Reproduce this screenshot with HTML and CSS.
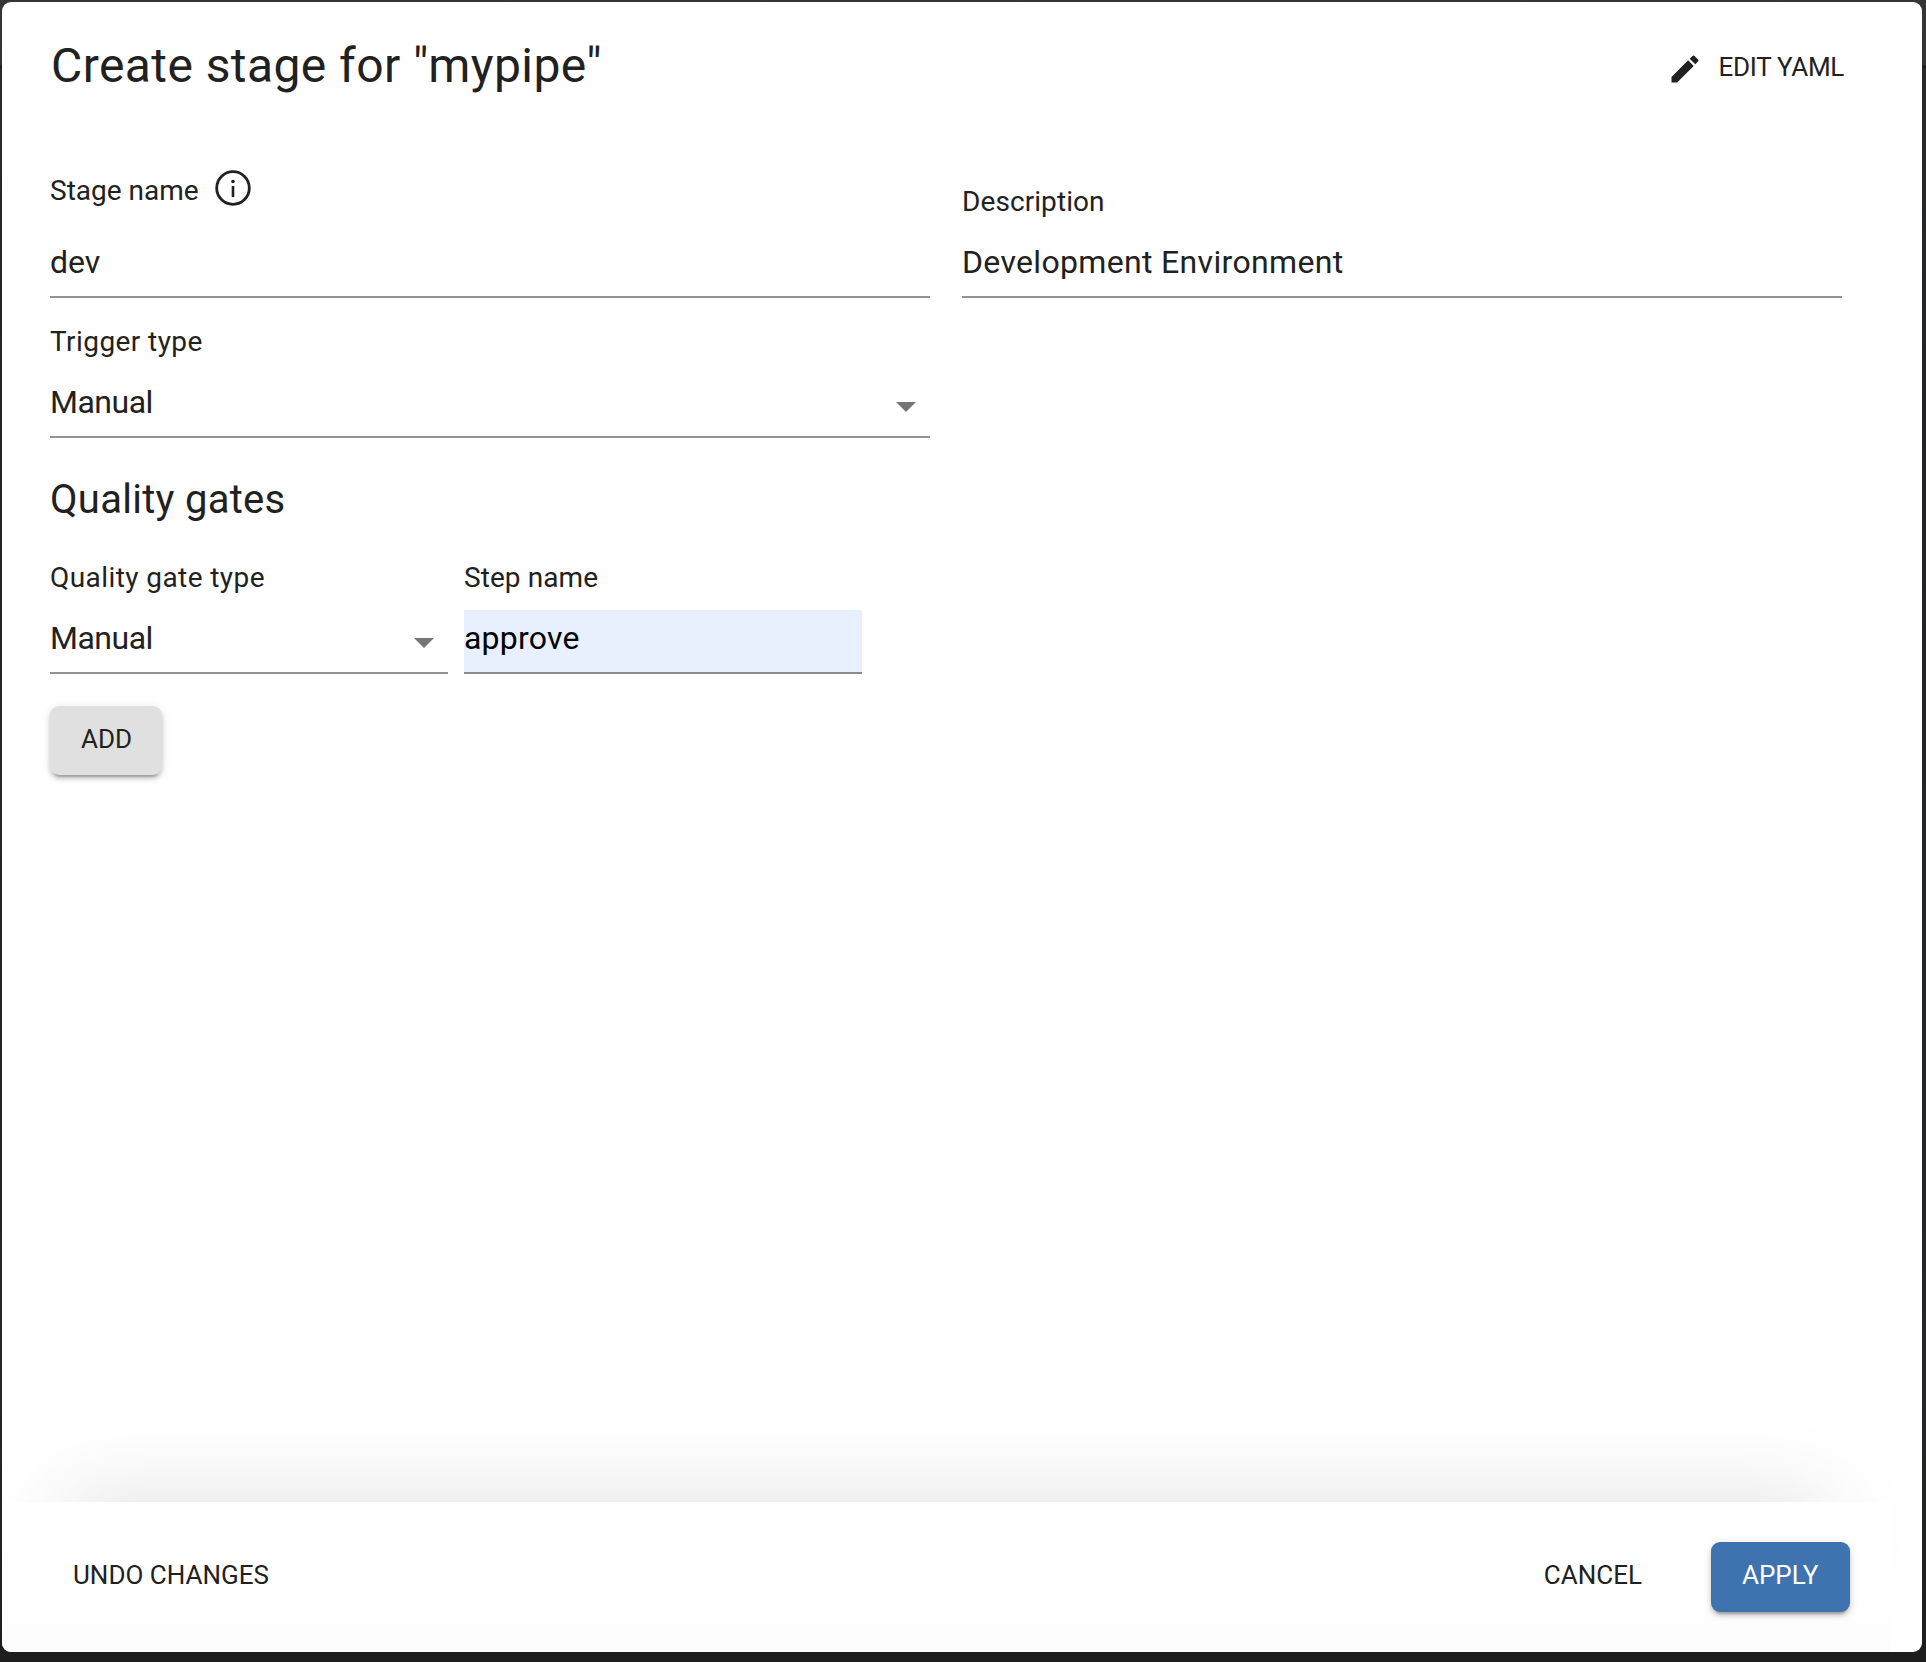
FILE: index.html
```html
<!DOCTYPE html>
<html lang="en">
<head>
<meta charset="utf-8">
<title>Create stage</title>
<link rel="stylesheet" href="styles.css">
</head>
<body>
<main class="dialog">
  <header class="header">
    <h1 class="title">Create stage for "mypipe"</h1>
    <button class="btn edit" type="button">
      <svg class="pencil" viewBox="0 0 24 24"><path d="M3 17.25V21h3.75L17.81 9.94l-3.75-3.75L3 17.25zM20.71 7.04a1 1 0 0 0 0-1.41l-2.34-2.34a1 1 0 0 0-1.41 0l-1.83 1.83 3.75 3.75 1.83-1.83z"/></svg>
      <span>EDIT YAML</span>
    </button>
  </header>
  <section class="form">
    <div class="grid">
      <div class="field">
        <div class="label label-info"><span>Stage name</span>
          <svg class="info" viewBox="0 0 36 36"><circle cx="18" cy="18" r="16.3" fill="none" stroke="currentColor" stroke-width="2.8"/><circle cx="18" cy="11.5" r="1.8"/><path d="M16.7 16h2.6v11h-2.6z"/></svg>
        </div>
        <div class="value">dev</div>
      </div>
      <div class="field">
        <div class="label">Description</div>
        <div class="value wide">Development Environment</div>
      </div>
      <div class="field">
        <div class="label wider">Trigger type</div>
        <div class="value select"><span>Manual</span><i class="arrow"></i></div>
      </div>
    </div>
    <h2 class="subtitle">Quality gates</h2>
    <div class="gates">
      <div class="field">
        <div class="label wider">Quality gate type</div>
        <div class="value select"><span>Manual</span><i class="arrow"></i></div>
      </div>
      <div class="field">
        <div class="label">Step name</div>
        <div class="value filled">approve</div>
      </div>
    </div>
    <button class="btn raised add" type="button">ADD</button>
  </section>
  <footer class="footer">
    <button class="btn undo" type="button">UNDO CHANGES</button>
    <button class="btn cancel" type="button">CANCEL</button>
    <button class="btn raised apply" type="button">APPLY</button>
  </footer>
</main>
</body>
</html>
```
FILE: styles.css
```css
* { box-sizing: border-box; }
body {
  margin: 0;
  height: 1662px;
  padding: 2px 4px 10px 2px;
  background: linear-gradient(#363536 0, #333 65px, #1c1c1c 66px, #2a2a2b 70px, #222324 400px, #252627 1400px, #1e1e1e 1655px);
  font-family: Roboto, sans-serif;
  color: #212121;
}
.dialog {
  display: flex;
  flex-direction: column;
  height: 1650px;
  background: #fff;
  border-radius: 9px;
  overflow: hidden;
}
.header {
  display: flex;
  justify-content: space-between;
  align-items: flex-start;
  height: 168px;
  padding: 36px 78px 0 49px;
}
.title { margin: 0; font-size: 48px; line-height: 56px; font-weight: 400; letter-spacing: .42px; }
.btn {
  display: flex;
  align-items: flex-start;
  border: 0;
  padding: 0;
  background: none;
  color: inherit;
  font: 400 26px/36px Roboto, sans-serif;
  white-space: nowrap;
}
.edit { gap: 16px; margin-top: 11px; letter-spacing: -.3px; }
.pencil { width: 36px; height: 36px; margin-top: 2px; fill: currentColor; }
.form { flex: 1; padding: 0 80px 0 48px; }
.grid {
  display: grid;
  grid-template-columns: 880px 880px;
  gap: 27px 32px;
  align-items: end;
}
.label { font-size: 28px; line-height: 34px; height: 32px; margin-bottom: 17px; letter-spacing: .08px; }
.label-info { display: flex; gap: 16px; height: 36px; line-height: 42px; margin-bottom: 28px; letter-spacing: 0; }
.info { width: 36px; height: 36px; fill: currentColor; }
.value {
  height: 64px;
  font-size: 32px;
  line-height: 56px;
  border-bottom: 2px solid #949494;
}
.wide { letter-spacing: .33px; }
.wider { letter-spacing: .42px; }
.select { display: flex; justify-content: space-between; padding-right: 14px; letter-spacing: -.5px; }
.arrow {
  margin-top: 28px;
  width: 20px;
  height: 10px;
  background: #757575;
  clip-path: polygon(0 0, 100% 0, 50% 100%);
}
.filled { background: #e8f0fe; border-bottom-color: #868b94; color: #000; letter-spacing: .2px; }
.subtitle { margin: 38px 0 37px; font-size: 40px; line-height: 48px; font-weight: 400; letter-spacing: .28px; }
.gates { display: grid; grid-template-columns: 398px 398px; gap: 16px; }
.raised {
  height: 70px;
  padding: 15px 31px 0;
  border-radius: 9px;
  box-shadow: 0 6px 2px -4px rgba(0,0,0,.2), 0 4px 4px rgba(0,0,0,.14), 0 2px 10px rgba(0,0,0,.12);
}
.add { margin-top: 32px; width: 112px; height: 69px; background: #e0e0e0; }
.footer {
  display: flex;
  align-items: flex-start;
  width: 1888px;
  height: 150px;
  padding: 40px 40px 0 71px;
  background: linear-gradient(#fff 60%, #fcfcfc);
  box-shadow: 0 -47px 90px -65px rgba(0,0,0,.4);
}
.undo { margin-top: 15px; }
.cancel { margin: 15px 69px 0 auto; }
.apply { width: 139px; background: #3f73af; color: #fff; }
```
